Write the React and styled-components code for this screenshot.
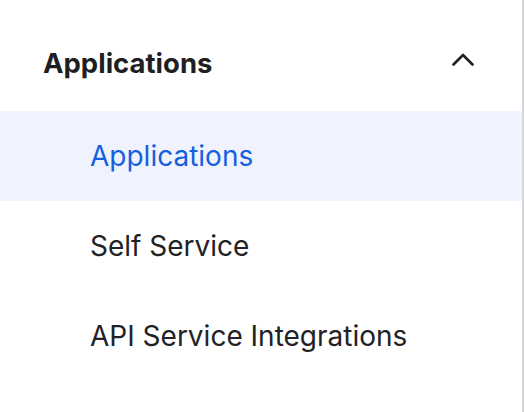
import React, { useState } from "react";
import styled, { createGlobalStyle } from "styled-components";

const GlobalStyle = createGlobalStyle`
  body {
    margin: 0;
    background: #ffffff;
    font-family: Inter, "Noto Sans", sans-serif;
  }
`;

const Sidebar = styled.nav`
  width: 522px;
  height: 412px;
  border-right: 2px solid #d6d6da;
  background: #ffffff;
`;

const SectionHeader = styled.button`
  width: 100%;
  height: 111px;
  display: flex;
  align-items: center;
  justify-content: space-between;
  padding: 14px 48px 0 43px;
  box-sizing: border-box;
  border: none;
  background: none;
  font-family: inherit;
  font-size: 27.5px;
  font-weight: 700;
  color: #1f1f23;
  cursor: pointer;
`;

const Chevron = styled.svg`
  width: 22px;
  height: 13px;
  margin-top: -6px;
`;

const List = styled.ul`
  list-style: none;
  margin: 0;
  padding: 0;
`;

const Item = styled.li`
  height: 90px;
  display: flex;
  align-items: center;
  padding-left: 90px;
  font-size: 28px;
  font-weight: 400;
  color: ${(p) => (p.active ? "#1560e0" : "#222226")};
  background: ${(p) => (p.active ? "#f0f3fd" : "transparent")};
`;

const items = ["Applications", "Self Service", "API Service Integrations"];

const App = () => {
  const [open, setOpen] = useState(true);
  return (
    <>
      <GlobalStyle />
      <Sidebar>
        <SectionHeader onClick={() => setOpen(!open)}>
          Applications
          <Chevron viewBox="0 0 22 13" fill="none" stroke="#1f1f23" strokeWidth="2.6" strokeLinecap="round" strokeLinejoin="round">
            <path d="M1.5 11.5L11 2l9.5 9.5" />
          </Chevron>
        </SectionHeader>
        {open && (
          <List>
            {items.map((label, i) => (
              <Item key={label} active={i === 0}>
                {label}
              </Item>
            ))}
          </List>
        )}
      </Sidebar>
    </>
  );
};

export default App;
